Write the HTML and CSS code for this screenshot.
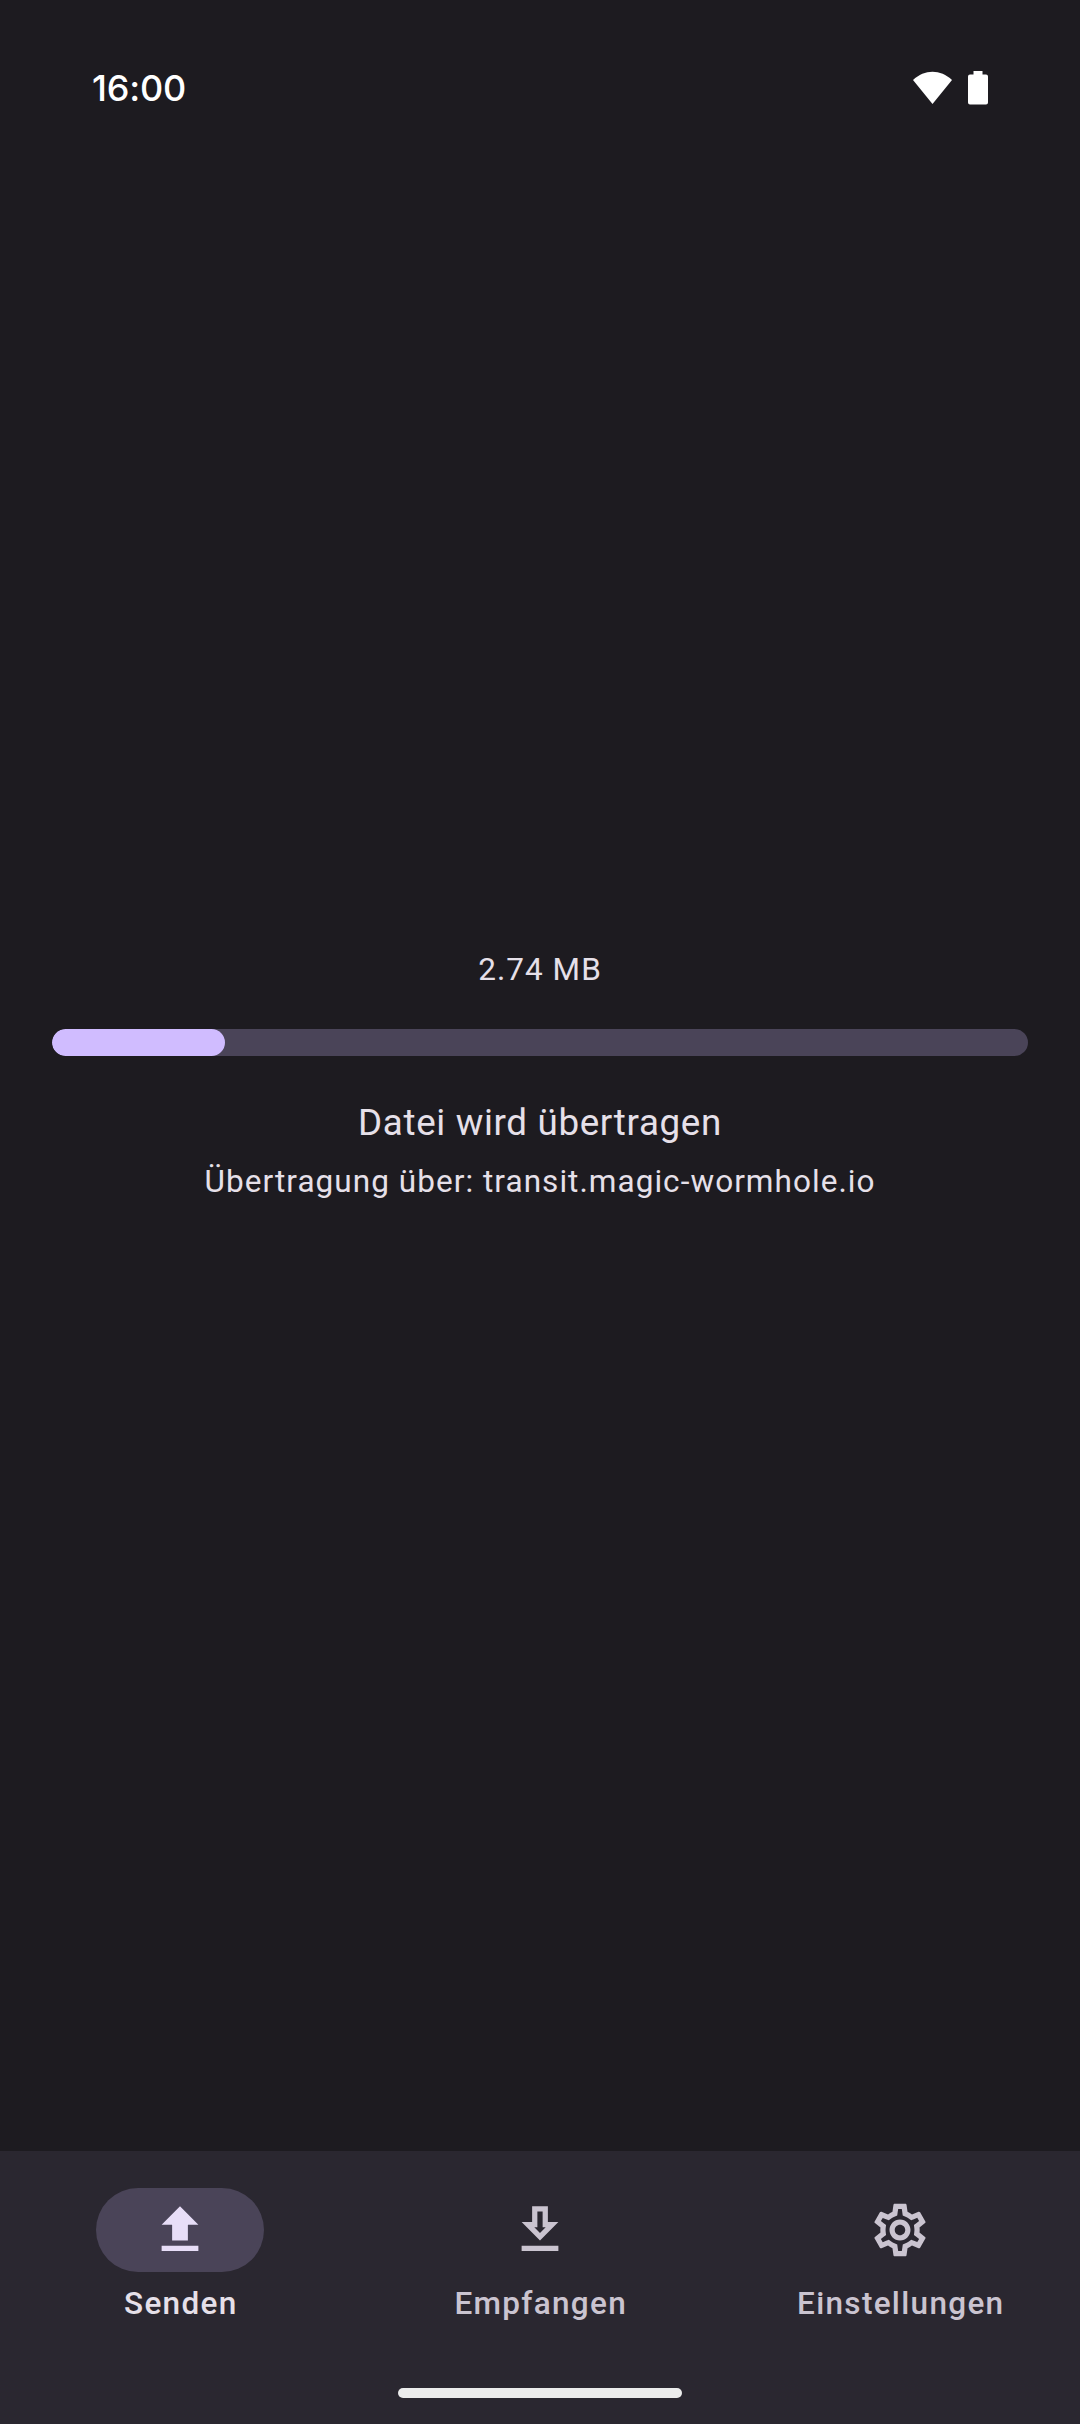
FILE: index.html
```html
<!DOCTYPE html>
<html lang="de">
<head>
<meta charset="utf-8">
<title>Senden</title>
<link rel="stylesheet" href="styles.css">
</head>
<body>
<header class="status">
  <span class="clock">16:00</span>
  <div class="indicators">
    <svg class="wifi" viewBox="0 0 40 34"><path d="M0 9C11.500-2 27.500-2 39 9L19.500 33Z"/></svg>
    <svg class="battery" viewBox="0 0 20 34"><path d="M5.500 0h9v3.500h3.500q2 0 2 2v26q0 2-2 2H2q-2 0-2-2v-26q0-2 2-2h3.500z"/></svg>
  </div>
</header>
<main class="transfer">
  <p class="size">2.74 MB</p>
  <div class="track"><div class="fill" style="width:173px"></div></div>
  <p class="title">Datei wird übertragen</p>
  <p class="via">Übertragung über: transit.magic-wormhole.io</p>
</main>
<footer class="bottom">
  <nav class="nav">
    <a class="item active"><span class="pill"><svg class="icon" viewBox="-0.190 -0.190 24.380 24.380"><path d="M5 20h14v-2H5zM5 10h4v6h6v-6h4l-7-7z"/></svg></span><span class="label">Senden</span></a>
    <a class="item"><span class="pill"><svg class="icon" viewBox="-0.190 -0.190 24.380 24.380"><path d="M19 9h-4V3H9v6H5l7 7zm-8 2V5h2v6h1.170L12 13.170 9.830 11zM5 18h14v2H5z"/></svg></span><span class="label">Empfangen</span></a>
    <a class="item"><span class="pill"><svg class="icon" viewBox="-0.190 -0.190 24.380 24.380"><path d="M19.430 12.980c.04-.32.070-.64.070-.98s-.03-.66-.07-.98l2.110-1.650c.19-.15.240-.42.120-.64l-2-3.460c-.09-.16-.26-.25-.44-.25-.06 0-.12.010-.17.030l-2.490 1c-.52-.4-1.080-.73-1.690-.98l-.38-2.650C14.460 2.180 14.250 2 14 2h-4c-.25 0-.46.180-.49.420l-.38 2.650c-.61.250-1.170.590-1.690.980l-2.490-1c-.06-.02-.12-.03-.18-.03-.17 0-.34.090-.43.250l-2 3.460c-.13.220-.07.490.120.640l2.110 1.650c-.04.320-.07.650-.07.980s.03.660.070.980l-2.110 1.650c-.19.150-.24.420-.12.640l2 3.460c.09.160.260.250.440.250.06 0 .12-.01.170-.03l2.490-1c.52.400 1.080.730 1.690.980l.38 2.650c.03.240.240.420.490.420h4c.25 0 .46-.18.490-.42l.38-2.650c.61-.25 1.170-.59 1.690-.98l2.490 1c.06.020.120.030.180.030.17 0 .34-.09.430-.25l2-3.460c.12-.22.070-.49-.12-.64zm-1.980-1.710c.04.310.050.520.050.730s-.02.430-.05.730l-.14 1.130.89.700 1.080.840-.7 1.210-1.270-.51-1.040-.42-.9.680c-.43.320-.84.560-1.250.730l-1.060.430-.16 1.130-.2 1.350h-1.400l-.19-1.350-.16-1.130-1.060-.43c-.43-.18-.83-.41-1.230-.71l-.91-.7-1.060.430-1.270.510-.7-1.210 1.080-.84.890-.7-.14-1.130c-.03-.31-.05-.54-.05-.74s.02-.43.050-.73l.14-1.130-.89-.7-1.080-.84.700-1.210 1.270.510 1.040.420.900-.68c.43-.32.840-.56 1.250-.73l1.060-.43.160-1.130.2-1.350h1.390l.19 1.350.16 1.130 1.060.430c.43.180.830.410 1.230.710l.91.700 1.060-.43 1.270-.51.700 1.210-1.070.850-.89.700zM12 8c-2.210 0-4 1.790-4 4s1.790 4 4 4 4-1.790 4-4-1.790-4-4-4m0 6c-1.100 0-2-.9-2-2s.9-2 2-2 2 .9 2 2-.9 2-2 2"/></svg></span><span class="label">Einstellungen</span></a>
  </nav>
  <div class="handle"></div>
</footer>
</body>
</html>
```
FILE: styles.css
```css
* { box-sizing: border-box; }
body { margin: 0; height: 2424px; display: flex; flex-direction: column; background: #1d1b20; color: #e6e0e9; font-family: Roboto, sans-serif; }
p { margin: 0; }
svg { display: block; fill: currentColor; }
.status { height: 136px; padding: 71px 92px 0 92px; display: flex; justify-content: space-between; align-items: flex-start; color: #fff; }
.clock { font: 500 36px/34px Inter, sans-serif; letter-spacing: -0.200px; }
.indicators { display: flex; gap: 15px; }
.wifi { width: 40px; height: 34px; }
.battery { width: 20px; height: 34px; }
.transfer { flex: 1; padding: 809px 52px 0; text-align: center; }
.size { font-size: 31.500px; line-height: 50px; letter-spacing: 1.050px; }
.track { height: 27px; margin-top: 34px; border-radius: 14px; background: #4a4458; overflow: hidden; }
.fill { height: 100%; border-radius: 14px; background: #d0bcff; }
.title { margin-top: 35px; font-size: 36.750px; line-height: 63px; letter-spacing: 0.660px; }
.via { font-size: 31.500px; line-height: 55px; letter-spacing: 1.050px; }
.bottom { height: 273px; padding-top: 37px; background: #2a2730; display: flex; flex-direction: column; align-items: center; }
.nav { width: 100%; display: grid; grid-template-columns: repeat(3, 1fr); }
.item { display: flex; flex-direction: column; align-items: center; color: #cac4d0; }
.pill { width: 168px; height: 84px; border-radius: 42px; display: flex; align-items: center; justify-content: center; }
.active .pill { background: #4a4458; color: #e8def8; }
.active .label { color: #e6e0e9; }
.icon { width: 64px; height: 64px; }
.label { margin-top: 11px; padding-left: 1.500px; font-size: 31.500px; font-weight: 500; line-height: 42px; letter-spacing: 1.310px; }
.handle { flex: none; width: 284px; height: 10px; margin-top: 63px; border-radius: 5px; background: #ececec; }
```
